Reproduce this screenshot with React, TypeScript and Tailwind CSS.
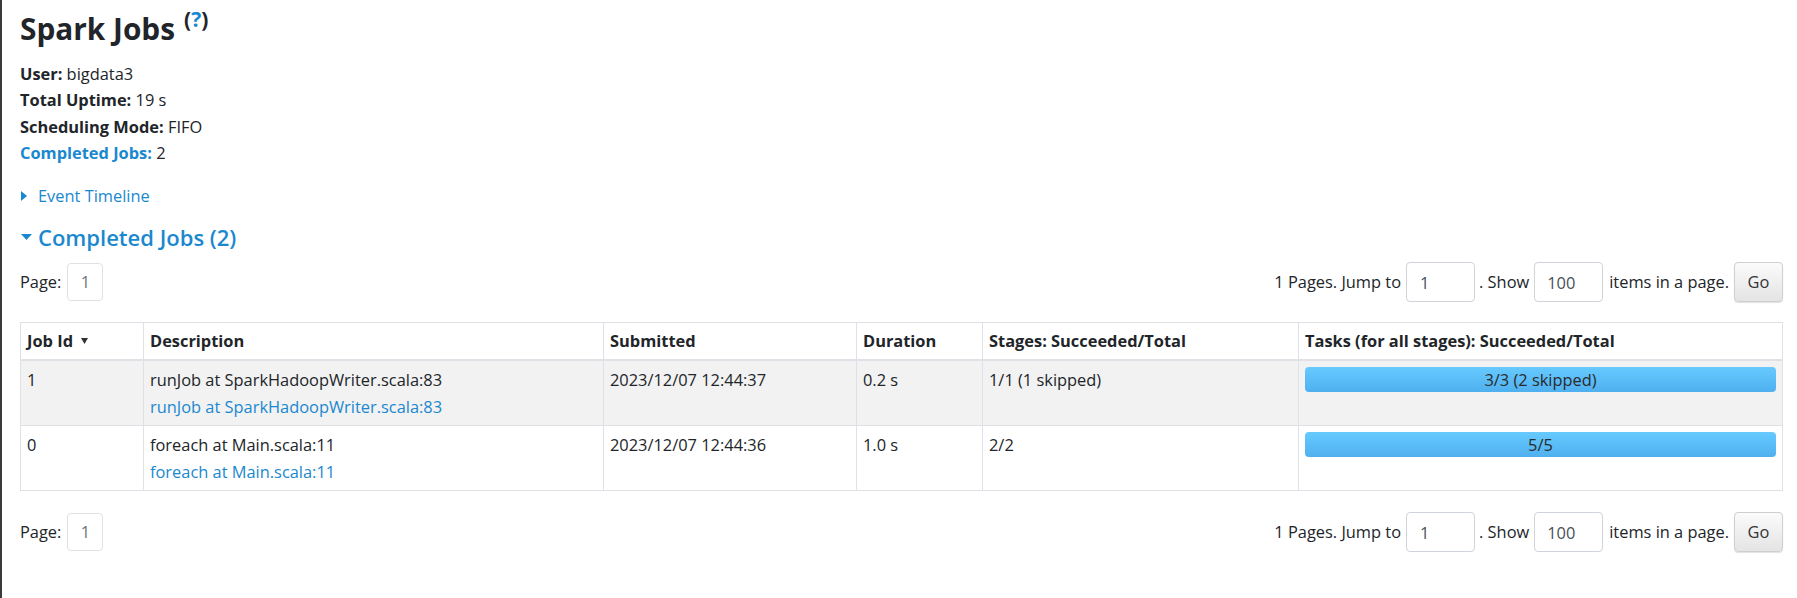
import React from "react";

const LINK = "text-[#1a88cf]";

interface Job {
  id: string;
  name: string;
  submitted: string;
  duration: string;
  stages: string;
  tasks: string;
}

const JOBS: Job[] = [
  {
    id: "1",
    name: "runJob at SparkHadoopWriter.scala:83",
    submitted: "2023/12/07 12:44:37",
    duration: "0.2 s",
    stages: "1/1 (1 skipped)",
    tasks: "3/3 (2 skipped)",
  },
  {
    id: "0",
    name: "foreach at Main.scala:11",
    submitted: "2023/12/07 12:44:36",
    duration: "1.0 s",
    stages: "2/2",
    tasks: "5/5",
  },
];

const Pager = () => {
  return (
    <div className="flex h-[40px] items-center justify-between">
      <div className="flex items-center gap-[6px]">
        <span>Page:</span>
        <span className="flex h-[38px] w-[36px] items-center justify-center rounded-[4px] border border-[#dee2e6] text-[#6c757d]">
          1
        </span>
      </div>
      <div className="flex items-center">
        <span>1 Pages. Jump to</span>
        <input
          readOnly
          value="1"
          className="ml-[5px] h-[40px] w-[69px] rounded-[4px] border border-[#ced4da] px-[13px] text-[#495057] outline-none"
        />
        <span className="ml-[4px]">. Show</span>
        <input
          readOnly
          value="100"
          className="ml-[5px] h-[40px] w-[69px] rounded-[4px] border border-[#ced4da] px-[12px] text-[#495057] outline-none"
        />
        <span className="ml-[6px]">items in a page.</span>
        <button
          type="button"
          className="ml-[5px] h-[40px] w-[49px] rounded-[4px] border border-[#cfcfcf] bg-gradient-to-b from-[#fbfbfb] to-[#e4e4e4] text-[#333] shadow-[0_1px_1px_rgba(0,0,0,0.12)]"
        >
          Go
        </button>
      </div>
    </div>
  );
};

const Th = ({ children }: { children: React.ReactNode }) => (
  <th className="border border-b-2 border-[#dee2e6] px-[6px] py-[5px] text-left align-top font-bold">{children}</th>
);

const Td = ({ children }: { children: React.ReactNode }) => (
  <td className="border border-[#dee2e6] px-[6px] pt-[6px] pb-[5px] align-top">{children}</td>
);

export default function App() {
  return (
    <div className="h-[598px] w-full overflow-hidden border-l-2 border-[#3a3a3a] bg-white pl-[18px] pr-[14px] font-['Open_Sans',sans-serif] text-[16.4px] leading-[26.4px] text-[#212529]">
      <h3 className="flex items-start pt-[10px] text-[29.8px] font-bold leading-[37px]">
        Spark Jobs
        <span className="ml-[9px] mt-[-4px] text-[21px] font-bold leading-[26px]">
          (<span className={LINK}>?</span>)
        </span>
      </h3>

      <ul className="mt-[14px]">
        <li>
          <strong>User:</strong> bigdata3
        </li>
        <li>
          <strong>Total Uptime:</strong> 19 s
        </li>
        <li>
          <strong>Scheduling Mode:</strong> FIFO
        </li>
        <li>
          <strong className={LINK}>Completed Jobs:</strong> 2
        </li>
      </ul>

      <div className={"mt-[16px] flex items-center " + LINK}>
        <svg width="6" height="10" viewBox="0 0 6 10" className="ml-[1px] mr-[11px]">
          <path d="M0 0 L6 5 L0 10 Z" fill="currentColor" />
        </svg>
        Event Timeline
      </div>

      <h4 className={"mt-[12px] flex items-center text-[22px] font-semibold leading-[32px] " + LINK}>
        <svg width="11" height="6" viewBox="0 0 11 6" className="ml-[1px] mr-[6px]">
          <path d="M0 0 L11 0 L5.5 6 Z" fill="currentColor" />
        </svg>
        Completed Jobs (2)
      </h4>

      <div className="mt-[9px]">
        <Pager />
      </div>

      <table className="mt-[20px] w-full table-fixed border-collapse border border-[#dee2e6]">
        <colgroup>
          <col className="w-[123px]" />
          <col className="w-[460px]" />
          <col className="w-[253px]" />
          <col className="w-[126px]" />
          <col className="w-[316px]" />
          <col />
        </colgroup>
        <thead>
          <tr>
            <Th>
              <span className="flex items-center">
                Job Id
                <svg width="7" height="6" viewBox="0 0 7 6" className="ml-[8px]">
                  <path d="M0 0 L7 0 L3.5 6 Z" fill="#333" />
                </svg>
              </span>
            </Th>
            <Th>Description</Th>
            <Th>Submitted</Th>
            <Th>Duration</Th>
            <Th>Stages: Succeeded/Total</Th>
            <Th>Tasks (for all stages): Succeeded/Total</Th>
          </tr>
        </thead>
        <tbody>
          {JOBS.map((job, i) => (
            <tr key={job.id} className={i % 2 === 0 ? "bg-[#f2f2f2]" : "bg-white"}>
              <Td>{job.id}</Td>
              <Td>
                <div>{job.name}</div>
                <div className={LINK}>{job.name}</div>
              </Td>
              <Td>{job.submitted}</Td>
              <Td>{job.duration}</Td>
              <Td>{job.stages}</Td>
              <Td>
                <div className="flex h-[25px] items-center justify-center rounded-[4px] bg-gradient-to-b from-[#66caff] to-[#4fb0ef] text-[#2a2a2a]">
                  {job.tasks}
                </div>
              </Td>
            </tr>
          ))}
        </tbody>
      </table>

      <div className="mt-[21px]">
        <Pager />
      </div>
    </div>
  );
}
